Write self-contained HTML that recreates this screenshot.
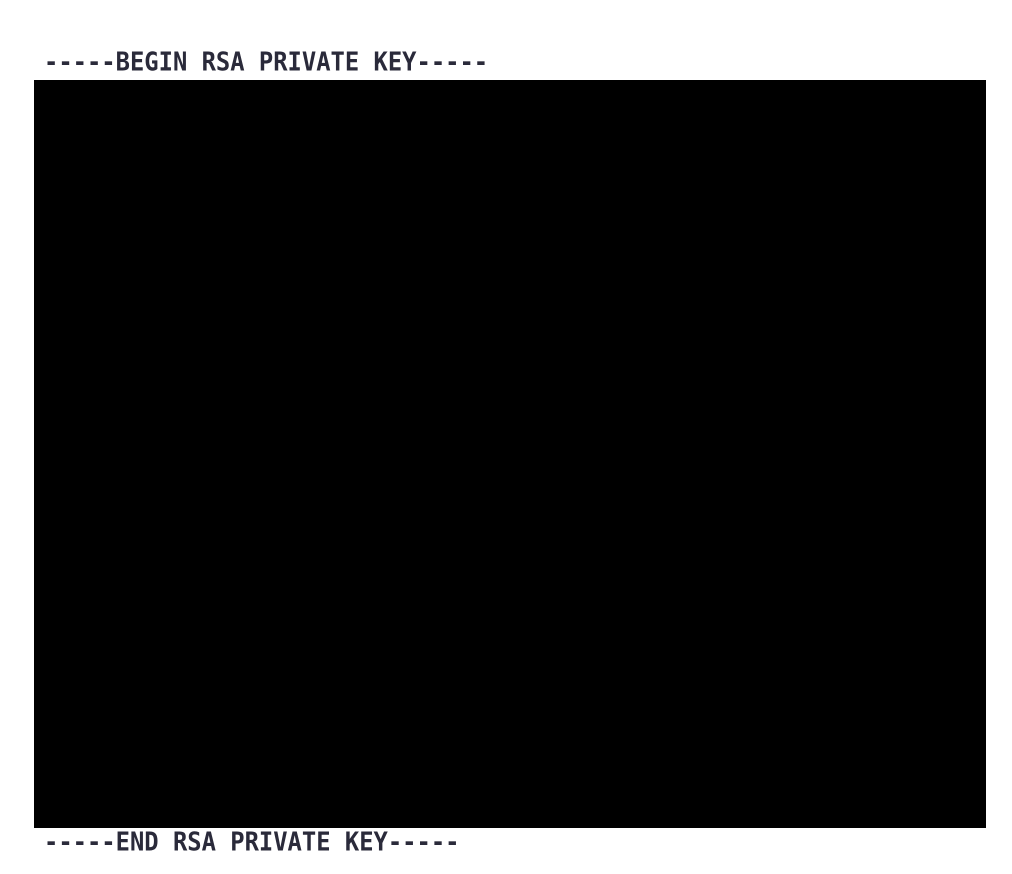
<!DOCTYPE html>
<html><head><style>
body{margin:0;width:1012px;height:874px;background:#fff;position:relative;overflow:hidden}
.t{position:absolute;left:44px;font-family:"DejaVu Sans Mono","Liberation Mono",monospace;font-weight:bold;font-size:23.8px;line-height:28px;color:#2a2a3a;white-space:pre;transform:scaleY(1.08);transform-origin:left center;-webkit-text-stroke:0}
.b{position:absolute;left:34px;top:80px;width:952px;height:748px;background:#000}
</style></head><body>
<div class="t" style="top:48px">-----BEGIN RSA PRIVATE KEY-----</div>
<div class="b"></div>
<div class="t" style="top:828px">-----END RSA PRIVATE KEY-----</div>
</body></html>
